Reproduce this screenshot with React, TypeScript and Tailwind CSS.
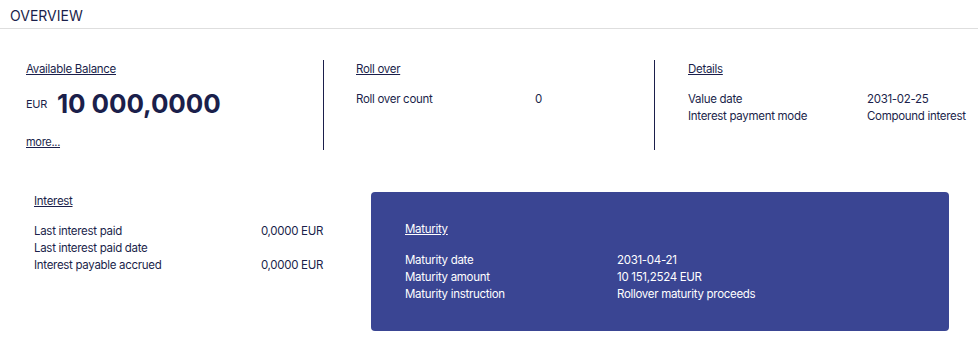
const navy = 'text-[#1b1f4b]';

function Row({ label, value, labelW }: { label: string; value?: string; labelW: string }) {
  return (
    <div className="flex h-[17px] items-center">
      <span className={labelW}>{label}</span>
      <span>{value}</span>
    </div>
  );
}

export default function App() {
  return (
    <div
      className={`w-[978px] h-[342px] bg-white ${navy} text-[11.5px] tracking-[-0.3px]`}
      style={{ fontFamily: 'Inter, "Liberation Sans", sans-serif' }}
    >
      <div className="h-[29px] border-b border-[#dedede] pl-[10px] pt-[7px] text-[14px] leading-[18px] tracking-normal">
        OVERVIEW
      </div>

      <div className="mt-[31px] flex">
        <div className="ml-[26px] flex h-[90px] w-[298px] flex-col border-r border-[#1b1f4b]">
          <a className="mt-[1px] w-fit underline leading-[16px]">Available Balance</a>
          <div className="mt-[11px] flex items-center">
            <span className="text-[11px]">EUR</span>
            <span className="ml-[10px] text-[26px] font-bold leading-[32px] tracking-[-0.1px]">10 000,0000</span>
          </div>
          <a className="mt-[14px] w-fit underline text-[11px] leading-[16px]">more...</a>
        </div>

        <div className="flex h-[90px] w-[331px] flex-col border-r border-[#1b1f4b] pl-[32px]">
          <a className="mt-[1px] w-fit underline leading-[16px]">Roll over</a>
          <div className="mt-[14px]">
            <Row label="Roll over count" value="0" labelW="w-[179px]" />
          </div>
        </div>

        <div className="flex h-[90px] flex-1 flex-col pl-[33px]">
          <a className="mt-[1px] w-fit underline leading-[16px]">Details</a>
          <div className="mt-[14px]">
            <Row label="Value date" value="2031-02-25" labelW="w-[179px]" />
            <Row label="Interest payment mode" value="Compound interest" labelW="w-[179px]" />
          </div>
        </div>
      </div>

      <div className="mt-[42px] flex">
        <div className="ml-[34px] w-[289px] pt-[1px]">
          <a className="block w-fit underline leading-[16px]">Interest</a>
          <div className="mt-[14px]">
            <div className="flex h-[17px] items-center justify-between">
              <span>Last interest paid</span>
              <span>0,0000 EUR</span>
            </div>
            <div className="flex h-[17px] items-center justify-between">
              <span>Last interest paid date</span>
              <span></span>
            </div>
            <div className="flex h-[17px] items-center justify-between">
              <span>Interest payable accrued</span>
              <span>0,0000 EUR</span>
            </div>
          </div>
        </div>

        <div className="ml-[48px] h-[139px] w-[578px] rounded-[4px] bg-[#3a4593] pl-[34px] pt-[29px] text-white">
          <a className="block w-fit underline leading-[16px]">Maturity</a>
          <div className="mt-[15px]">
            <Row label="Maturity date" value="2031-04-21" labelW="w-[212px]" />
            <Row label="Maturity amount" value="10 151,2524 EUR" labelW="w-[212px]" />
            <Row label="Maturity instruction" value="Rollover maturity proceeds" labelW="w-[212px]" />
          </div>
        </div>
      </div>
    </div>
  );
}
